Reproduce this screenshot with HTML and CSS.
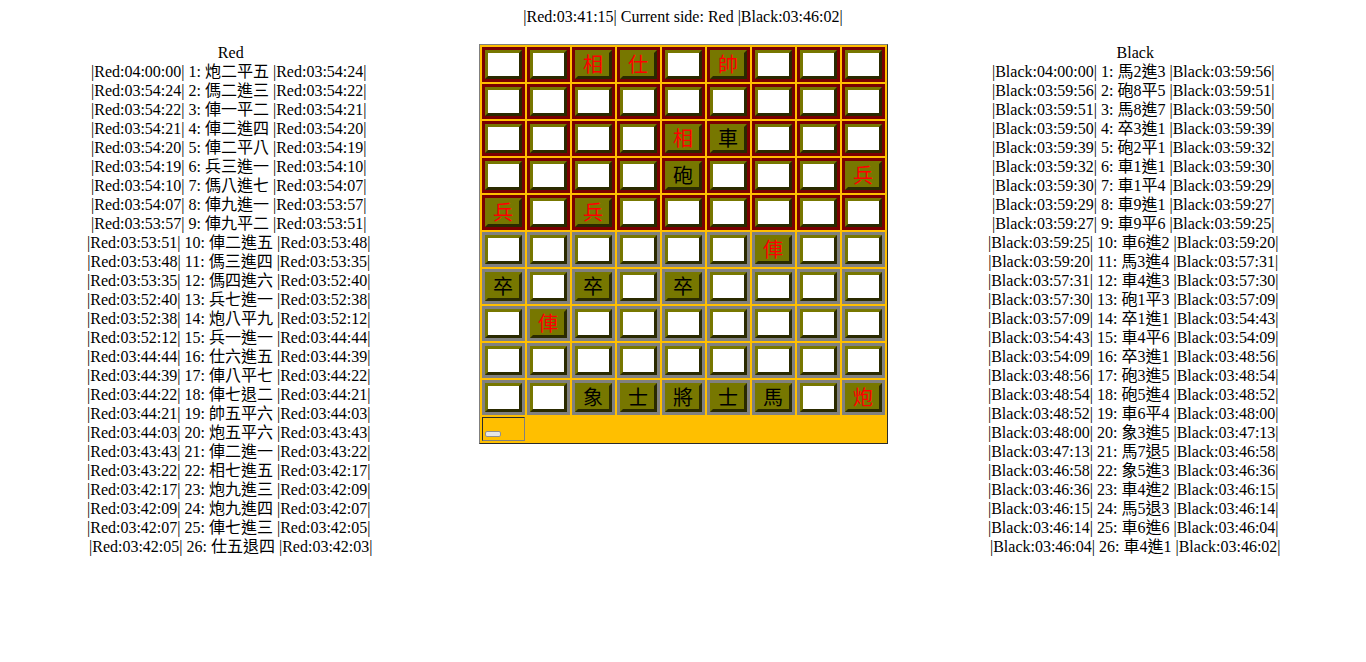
FILE: index.html
```html
<!DOCTYPE html>
<html lang="en">
<head>
    <meta charset="UTF-8">
    <title>Xiangqi</title>
    <link rel="stylesheet" href="styles.css">
</head>
<body>
    <div class="status">|Red:03:41:15| Current side: Red |Black:03:46:02|</div>
    <div class="game">
        <div class="moves">
            <div>Red</div>
            <div>|Red:04:00:00| 1: 炮二平五 |Red:03:54:24|</div>
            <div>|Red:03:54:24| 2: 傌二進三 |Red:03:54:22|</div>
            <div>|Red:03:54:22| 3: 俥一平二 |Red:03:54:21|</div>
            <div>|Red:03:54:21| 4: 俥二進四 |Red:03:54:20|</div>
            <div>|Red:03:54:20| 5: 俥二平八 |Red:03:54:19|</div>
            <div>|Red:03:54:19| 6: 兵三進一 |Red:03:54:10|</div>
            <div>|Red:03:54:10| 7: 傌八進七 |Red:03:54:07|</div>
            <div>|Red:03:54:07| 8: 俥九進一 |Red:03:53:57|</div>
            <div>|Red:03:53:57| 9: 俥九平二 |Red:03:53:51|</div>
            <div>|Red:03:53:51| 10: 俥二進五 |Red:03:53:48|</div>
            <div>|Red:03:53:48| 11: 傌三進四 |Red:03:53:35|</div>
            <div>|Red:03:53:35| 12: 傌四進六 |Red:03:52:40|</div>
            <div>|Red:03:52:40| 13: 兵七進一 |Red:03:52:38|</div>
            <div>|Red:03:52:38| 14: 炮八平九 |Red:03:52:12|</div>
            <div>|Red:03:52:12| 15: 兵一進一 |Red:03:44:44|</div>
            <div>|Red:03:44:44| 16: 仕六進五 |Red:03:44:39|</div>
            <div>|Red:03:44:39| 17: 俥八平七 |Red:03:44:22|</div>
            <div>|Red:03:44:22| 18: 俥七退二 |Red:03:44:21|</div>
            <div>|Red:03:44:21| 19: 帥五平六 |Red:03:44:03|</div>
            <div>|Red:03:44:03| 20: 炮五平六 |Red:03:43:43|</div>
            <div>|Red:03:43:43| 21: 俥二進一 |Red:03:43:22|</div>
            <div>|Red:03:43:22| 22: 相七進五 |Red:03:42:17|</div>
            <div>|Red:03:42:17| 23: 炮九進三 |Red:03:42:09|</div>
            <div>|Red:03:42:09| 24: 炮九進四 |Red:03:42:07|</div>
            <div>|Red:03:42:07| 25: 俥七進三 |Red:03:42:05|</div>
            <div>|Red:03:42:05| 26: 仕五退四 |Red:03:42:03|</div>
        </div>

        <div class="board">
            <!-- row 0 -->
            <div class="cell red"><button class="piece"></button></div>
            <div class="cell red"><button class="piece"></button></div>
            <div class="cell red"><button class="piece taken side-red">相</button></div>
            <div class="cell red"><button class="piece taken side-red">仕</button></div>
            <div class="cell red"><button class="piece"></button></div>
            <div class="cell red"><button class="piece taken side-red">帥</button></div>
            <div class="cell red"><button class="piece"></button></div>
            <div class="cell red"><button class="piece"></button></div>
            <div class="cell red"><button class="piece"></button></div>
            <!-- row 1 -->
            <div class="cell red"><button class="piece"></button></div>
            <div class="cell red"><button class="piece"></button></div>
            <div class="cell red"><button class="piece"></button></div>
            <div class="cell red"><button class="piece"></button></div>
            <div class="cell red"><button class="piece"></button></div>
            <div class="cell red"><button class="piece"></button></div>
            <div class="cell red"><button class="piece"></button></div>
            <div class="cell red"><button class="piece"></button></div>
            <div class="cell red"><button class="piece"></button></div>
            <!-- row 2 -->
            <div class="cell red"><button class="piece"></button></div>
            <div class="cell red"><button class="piece"></button></div>
            <div class="cell red"><button class="piece"></button></div>
            <div class="cell red"><button class="piece"></button></div>
            <div class="cell red"><button class="piece taken side-red">相</button></div>
            <div class="cell red"><button class="piece taken">車</button></div>
            <div class="cell red"><button class="piece"></button></div>
            <div class="cell red"><button class="piece"></button></div>
            <div class="cell red"><button class="piece"></button></div>
            <!-- row 3 -->
            <div class="cell red"><button class="piece"></button></div>
            <div class="cell red"><button class="piece"></button></div>
            <div class="cell red"><button class="piece"></button></div>
            <div class="cell red"><button class="piece"></button></div>
            <div class="cell red"><button class="piece taken">砲</button></div>
            <div class="cell red"><button class="piece"></button></div>
            <div class="cell red"><button class="piece"></button></div>
            <div class="cell red"><button class="piece"></button></div>
            <div class="cell red"><button class="piece taken side-red">兵</button></div>
            <!-- row 4 -->
            <div class="cell red"><button class="piece taken side-red">兵</button></div>
            <div class="cell red"><button class="piece"></button></div>
            <div class="cell red"><button class="piece taken side-red">兵</button></div>
            <div class="cell red"><button class="piece"></button></div>
            <div class="cell red"><button class="piece"></button></div>
            <div class="cell red"><button class="piece"></button></div>
            <div class="cell red"><button class="piece"></button></div>
            <div class="cell red"><button class="piece"></button></div>
            <div class="cell red"><button class="piece"></button></div>
            <!-- row 5 -->
            <div class="cell"><button class="piece"></button></div>
            <div class="cell"><button class="piece"></button></div>
            <div class="cell"><button class="piece"></button></div>
            <div class="cell"><button class="piece"></button></div>
            <div class="cell"><button class="piece"></button></div>
            <div class="cell"><button class="piece"></button></div>
            <div class="cell"><button class="piece taken side-red">俥</button></div>
            <div class="cell"><button class="piece"></button></div>
            <div class="cell"><button class="piece"></button></div>
            <!-- row 6 -->
            <div class="cell"><button class="piece taken">卒</button></div>
            <div class="cell"><button class="piece"></button></div>
            <div class="cell"><button class="piece taken">卒</button></div>
            <div class="cell"><button class="piece"></button></div>
            <div class="cell"><button class="piece taken">卒</button></div>
            <div class="cell"><button class="piece"></button></div>
            <div class="cell"><button class="piece"></button></div>
            <div class="cell"><button class="piece"></button></div>
            <div class="cell"><button class="piece"></button></div>
            <!-- row 7 -->
            <div class="cell"><button class="piece"></button></div>
            <div class="cell"><button class="piece taken side-red">俥</button></div>
            <div class="cell"><button class="piece"></button></div>
            <div class="cell"><button class="piece"></button></div>
            <div class="cell"><button class="piece"></button></div>
            <div class="cell"><button class="piece"></button></div>
            <div class="cell"><button class="piece"></button></div>
            <div class="cell"><button class="piece"></button></div>
            <div class="cell"><button class="piece"></button></div>
            <!-- row 8 -->
            <div class="cell"><button class="piece"></button></div>
            <div class="cell"><button class="piece"></button></div>
            <div class="cell"><button class="piece"></button></div>
            <div class="cell"><button class="piece"></button></div>
            <div class="cell"><button class="piece"></button></div>
            <div class="cell"><button class="piece"></button></div>
            <div class="cell"><button class="piece"></button></div>
            <div class="cell"><button class="piece"></button></div>
            <div class="cell"><button class="piece"></button></div>
            <!-- row 9 -->
            <div class="cell"><button class="piece"></button></div>
            <div class="cell"><button class="piece"></button></div>
            <div class="cell"><button class="piece taken">象</button></div>
            <div class="cell"><button class="piece taken">士</button></div>
            <div class="cell"><button class="piece taken">將</button></div>
            <div class="cell"><button class="piece taken">士</button></div>
            <div class="cell"><button class="piece taken">馬</button></div>
            <div class="cell"><button class="piece"></button></div>
            <div class="cell"><button class="piece taken side-red">炮</button></div>
            <!-- controls -->
            <div class="controls"><button class="small-btn"></button></div>
        </div>

        <div class="moves">
            <div>Black</div>
            <div>|Black:04:00:00| 1: 馬2進3 |Black:03:59:56|</div>
            <div>|Black:03:59:56| 2: 砲8平5 |Black:03:59:51|</div>
            <div>|Black:03:59:51| 3: 馬8進7 |Black:03:59:50|</div>
            <div>|Black:03:59:50| 4: 卒3進1 |Black:03:59:39|</div>
            <div>|Black:03:59:39| 5: 砲2平1 |Black:03:59:32|</div>
            <div>|Black:03:59:32| 6: 車1進1 |Black:03:59:30|</div>
            <div>|Black:03:59:30| 7: 車1平4 |Black:03:59:29|</div>
            <div>|Black:03:59:29| 8: 車9進1 |Black:03:59:27|</div>
            <div>|Black:03:59:27| 9: 車9平6 |Black:03:59:25|</div>
            <div>|Black:03:59:25| 10: 車6進2 |Black:03:59:20|</div>
            <div>|Black:03:59:20| 11: 馬3進4 |Black:03:57:31|</div>
            <div>|Black:03:57:31| 12: 車4進3 |Black:03:57:30|</div>
            <div>|Black:03:57:30| 13: 砲1平3 |Black:03:57:09|</div>
            <div>|Black:03:57:09| 14: 卒1進1 |Black:03:54:43|</div>
            <div>|Black:03:54:43| 15: 車4平6 |Black:03:54:09|</div>
            <div>|Black:03:54:09| 16: 卒3進1 |Black:03:48:56|</div>
            <div>|Black:03:48:56| 17: 砲3進5 |Black:03:48:54|</div>
            <div>|Black:03:48:54| 18: 砲5進4 |Black:03:48:52|</div>
            <div>|Black:03:48:52| 19: 車6平4 |Black:03:48:00|</div>
            <div>|Black:03:48:00| 20: 象3進5 |Black:03:47:13|</div>
            <div>|Black:03:47:13| 21: 馬7退5 |Black:03:46:58|</div>
            <div>|Black:03:46:58| 22: 象5進3 |Black:03:46:36|</div>
            <div>|Black:03:46:36| 23: 車4進2 |Black:03:46:15|</div>
            <div>|Black:03:46:15| 24: 馬5退3 |Black:03:46:14|</div>
            <div>|Black:03:46:14| 25: 車6進6 |Black:03:46:04|</div>
            <div>|Black:03:46:04| 26: 車4進1 |Black:03:46:02|</div>
        </div>
    </div>
</body>
</html>
```

FILE: styles.css
```css
body {
    font-family: "Liberation Serif", "Noto Sans CJK TC", serif;
    font-size: 16px;
    line-height: 19px;
    color: #000;
    background-color: #fff;
    margin: 7px 8px 8px;
}
.status {
    text-align: center;
    margin-bottom: 17px;
}
.game {
    display: grid;
    grid-template-columns: 1fr 409px 1fr;
    column-gap: 25px;
    align-items: start;
}
.moves {
    text-align: center;
    white-space: nowrap;
}
/* every move row but the last ends in a non-breaking space */
.moves div:not(:first-child):not(:last-child)::after {
    content: "\00a0";
}
.board {
    display: grid;
    grid-template-columns: repeat(9, 43px);
    grid-template-rows: repeat(10, 35px) 24px;
    gap: 2px;
    padding: 2px;
    margin-top: 1px;
    background-color: #ffbf00;
    border: 1px solid;
    border-color: #808080 #2a2a2a #2a2a2a #808080;
}
.cell {
    display: flex;
    padding: 3px;
    background-color: #808080;
}
.cell.red {
    background-color: #7a0000;
}
.piece {
    flex: 1;
    min-width: 0;
    padding: 1px 0 0;
    border: 3px solid;
    border-color: #777700 #2a2a00 #2a2a00 #777700;
    background-color: #fff;
    font-family: "Liberation Serif", "Noto Sans CJK TC", serif;
    font-size: 20px;
    line-height: 23px;
    color: #000;
}
.piece.taken {
    background-color: #777700;
}
.piece.side-red {
    color: #f00;
}
.controls {
    grid-column: 1;
    box-sizing: border-box;
    padding: 0 0 3px 2px;
    display: flex;
    align-items: flex-end;
    border: 1px solid;
    border-color: #2a2a2a #808080 #808080 #2a2a2a;
}
.small-btn {
    width: 16px;
    height: 6px;
    padding: 0;
    border: 1px solid #8f8f8f;
    border-radius: 2px;
    background-color: #e6e6e6;
}
```
